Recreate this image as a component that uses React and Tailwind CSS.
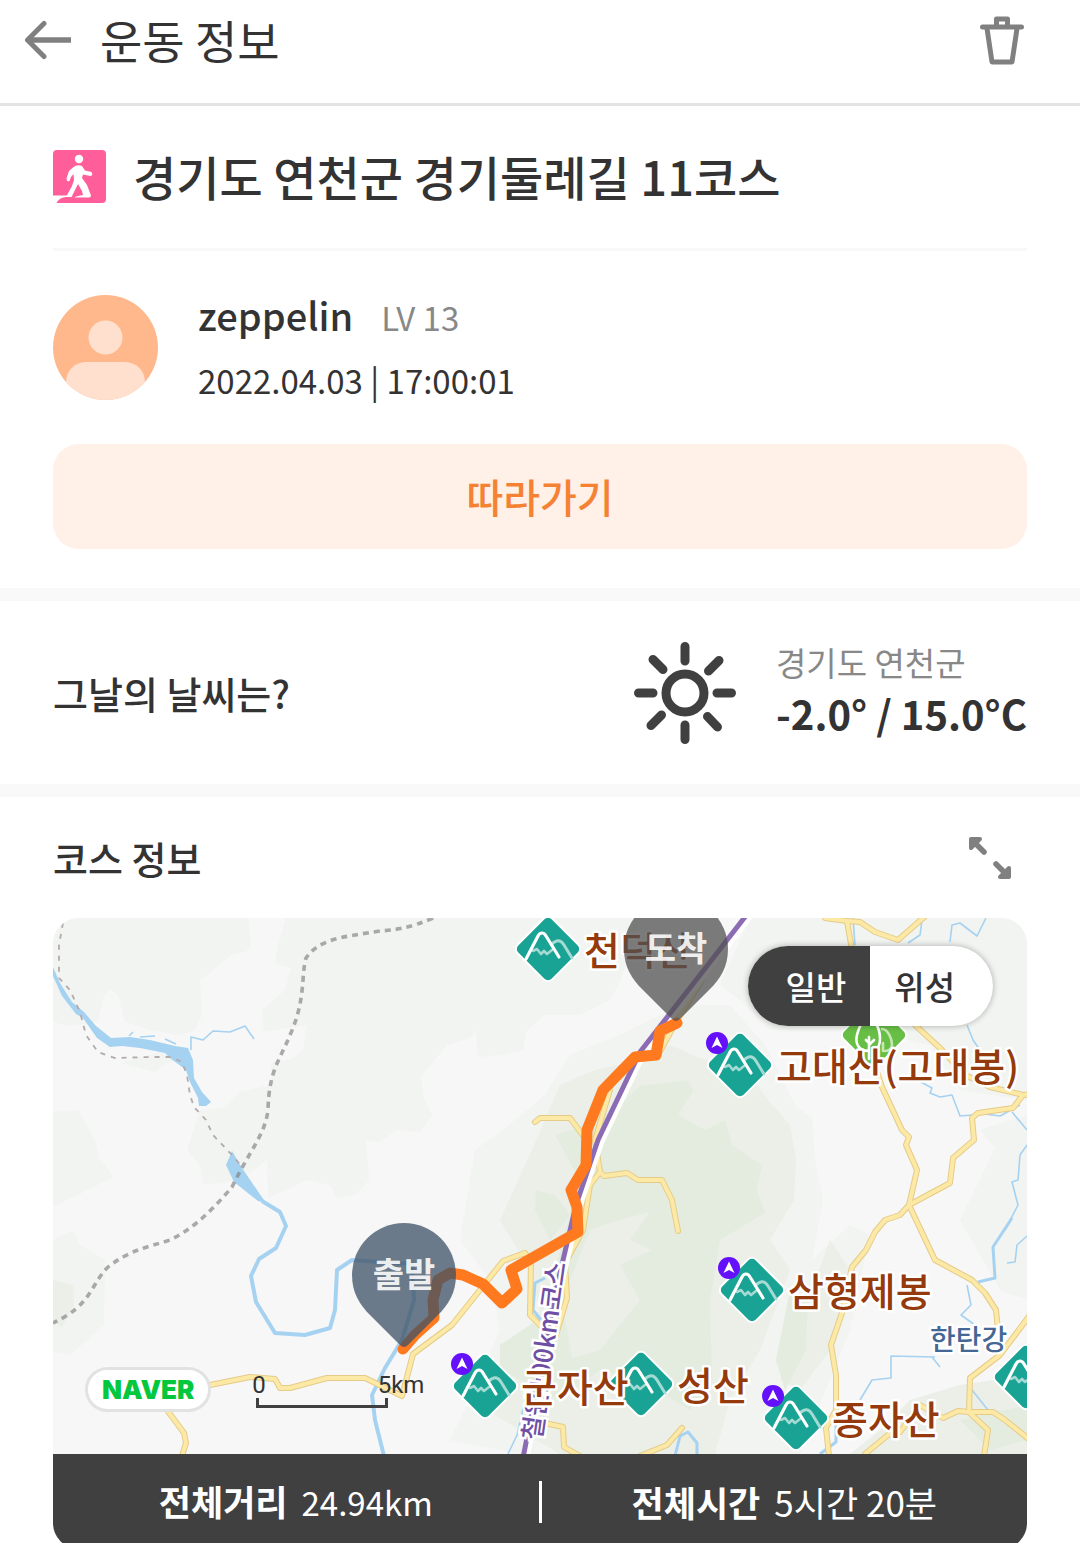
import React, { useState } from "react";

const reliefLight = [
  "M53 918H248L251 945 247 951 231 955 216 968 200 980 202 1015 195 1030 180 1035 150 1030 125 1022 118 995 110 990 104 995 98 1022 70 1026 53 1022Z",
  "M286 918 277 950 275 964 291 968 285 990 262 1010 264 1032 307 1025 303 1050 290 1060 271 1062 272 1085 240 1092 225 1108 200 1110 187 1150 200 1165 204 1185 240 1180 267 1160 268 1198 308 1180 330 1185 337 1198 355 1195 369 1180 366 1140 380 1142 397 1130 420 1132 433 1115 424 1100 421 1077 447 1045 470 1038 476 1030 477 1057 500 1055 523 1050 527 1030 545 1015 580 1015 610 1000 621 980 640 918Z",
  "M53 1112 78 1110 95 1140 100 1160 114 1177 53 1207Z",
  "M53 1240 73 1230 80 1245 105 1260 104 1325 70 1355 53 1352Z",
  "M120 1063 155 1072 166 1063 185 1060 160 1052Z",
  "M1027 918H750L720 985 740 1000 770 1030 860 1030 930 1045 960 1090 1027 1100Z",
  "M1027 1115 980 1130 995 1148 975 1190 960 1220 1000 1290 1027 1300Z",
  "M475 1150 505 1128 545 1095 570 1055 620 1035 680 1005 730 1005 765 1045 795 1105 812 1118 815 1160 823 1200 812 1260 850 1225 870 1235 850 1330 800 1454H520L450 1440 470 1400 500 1330 490 1280 460 1240Z",
];

const reliefMid = [
  "M532 1150 560 1085 595 1070 640 1060 670 1045 700 1058 745 1068 768 1100 790 1125 796 1160 794 1200 770 1240 790 1270 760 1350 730 1400 715 1454H560L520 1430 470 1400 500 1370 540 1310 530 1270 500 1220Z",
  "M53 1280 73 1285 74 1305 62 1327 53 1322Z",
  "M910 1400 960 1385 1027 1375V1454H850L880 1430Z",
  "M830 1240 812 1290 780 1380 800 1390 830 1350 850 1270Z",
];

const reliefDeep = [
  "M555 1135 572 1130 614 1110 640 1086 688 1080 693 1091 678 1115 705 1130 725 1120 732 1145 762 1165 757 1190 765 1213 720 1240 710 1300 712 1380 690 1410 640 1380 600 1370 560 1400 500 1370 500 1345 545 1315 560 1250 580 1180Z",
  "M536 1190 555 1195 570 1215 550 1240 535 1210Z",
  "M790 1290 808 1300 806 1350 785 1390 776 1360Z",
  "M960 1420 1027 1405V1440L990 1450Z",
];

const reliefGaps = [
  "M612 1222 650 1212 630 1240 652 1250 620 1265 640 1300 600 1350 572 1358 562 1300 590 1230Z",
];

const rivers = [
  "M191 1050V1037L203 1040 213 1031 230 1032 245 1026 254 1039",
  "M129 1036 133 1032 M140 1037 155 1036 M165 1039 176 1044",
  "M950 942 952 925 960 923 977 936 986 918",
  "M855 945 853 918 M908 943 920 935 922 920",
  "M967 1025 973 1040 980 1050 M910 1070 917 1080 932 1088 930 1093 940 1097 952 1095 960 1116 985 1114 1000 1116 1020 1105 M1012 1112 1027 1130",
  "M1027 1145 1020 1155 1018 1180 1012 1182 1018 1205 1005 1230",
  "M967 1285 971 1305 961 1315 975 1325",
  "M1027 1236 1017 1245 1015 1262 1007 1263",
  "M935 1357 891 1356V1378L872 1380 860 1400 M932 1357 940 1367",
  "M972 1390 988 1410",
  "M525 1400 517 1435 508 1454",
];

const roads = [
  "M205 1386 250 1377 275 1379 280 1388 290 1388 327 1378 365 1378 402 1396 413 1354 452 1325 480 1290 503 1261 525 1253 531 1262 530 1315 547 1332",
  "M167 1410 184 1433 186 1443 182 1456",
  "M535 1122 540 1118 570 1118 585 1138",
  "M610 1090 595 1140 600 1172 590 1185 583 1230 565 1263 567 1298 556 1335",
  "M600 1172 604 1176 627 1173 638 1180 662 1180 672 1200 678 1231",
  "M702 980 676 1022 658 1055",
  "M825 918 847 921 860 922 875 932 898 940 930 912",
  "M847 921 852 950 868 1045 882 1087 902 1130 909 1137 906 1145 917 1170 909 1205 935 1260 972 1280 985 1293 996 1310 998 1330",
  "M909 1205 900 1215 885 1220 875 1232 866 1250 852 1267 843 1310 831 1345 836 1375V1410L826 1428 829 1456",
  "M909 1205 950 1183 953 1158 974 1140 972 1118 978 1113 1013 1108 1023 1095 990 1087 965 1075 940 1048 915 1025",
  "M1030 1315 1000 1355 970 1378 969 1412 988 1430 984 1456",
  "M1023 1095 1030 1094",
  "M1030 1440 1005 1420 993 1412 969 1412 958 1411 943 1418 920 1405 900 1432 888 1435 865 1454",
  "M545 1423 563 1427 564 1447 580 1456",
  "M640 1456 667 1445 682 1428",
];

const route =
  "M677 1023 660 1031 656 1055 635 1057 603 1090 587 1130 586 1165 571 1190 577 1207 578 1232 511 1270 517 1289 502 1303 483 1284 463 1275 450 1273 438 1280 433 1300 434 1318 415 1335 403 1349";

const railway =
  "M433 918C410 928 395 930 380 931 340 937 318 940 306 958 301 975 306 1000 290 1035 280 1060 269 1070 268 1110 265 1135 250 1150 232 1187 215 1207 195 1228 170 1240 145 1248 130 1250 108 1267 90 1285 92 1305 53 1323";

const border =
  "M63 923 59 945V978L70 990 80 1012 86 1035 98 1052 115 1058 150 1057 170 1057 182 1062 187 1075 190 1095 194 1107 206 1120 213 1135 232 1155 243 1168";

const peaks = [
  { x: 548, y: 949, name: "천덕산" },
  { x: 740, y: 1065, name: "고대산(고대봉)", badge: true },
  { x: 752, y: 1290, name: "삼형제봉", badge: true },
  { x: 485, y: 1386, name: "군자산", badge: true },
  { x: 641, y: 1384, name: "성산" },
  { x: 796, y: 1418, name: "종자산", badge: true },
  { x: 1026, y: 1377 },
];

function Peak({ x, y, badge }) {
  return (
    <g transform={`translate(${x} ${y})`} fill="none" strokeLinecap="round" strokeLinejoin="round">
      <rect x="-24.5" y="-24.5" width="49" height="49" rx="6" transform="rotate(45)" fill="#18a394" stroke="#fff" strokeWidth="2" />
      <path d="M-15 2 -11 0 -7 5 -4 2 -1 5 4 1" stroke="#a4dad3" strokeWidth="2.6" />
      <path d="M4 -5C9 -10 13 -9 16 -4L24 9" stroke="#a4dad3" strokeWidth="3" />
      <path d="M-22 10 -10 -13C-8 -17 -4 -17 -2 -13L11 8" stroke="#fff" strokeWidth="3.2" />
      {badge && (
        <g transform="translate(-23 -22)">
          <circle r="11" fill="#6410fa" />
          <path d="M0 -6.5 5.5 5 0 2 -5.5 5Z" fill="#fff" />
        </g>
      )}
    </g>
  );
}

function Pin({ x, y, color, label }) {
  return (
    <g transform={`translate(${x} ${y})`}>
      <path
        d="M0 -52A52 52 0 0 1 52 0C52 18 44 30 34 40L4 70Q0 74 -4 70L-34 40C-44 30 -52 18 -52 0A52 52 0 0 1 0 -52Z"
        fill={color}
        fillOpacity="0.75"
      />
      <text y="12" textAnchor="middle" fontSize="34" fontWeight="700" fill="#fff" fillOpacity="0.9">
        {label}
      </text>
    </g>
  );
}

function CourseMap() {
  return (
    <svg viewBox="53 918 974 536" className="block w-full bg-[#f7f7f7]" role="img" aria-label="코스 지도">
      <g fill="#f1f4f0">
        {reliefLight.map((d) => (
          <path key={d} d={d} />
        ))}
      </g>
      <g fill="#ebefe8">
        {reliefMid.map((d) => (
          <path key={d} d={d} />
        ))}
      </g>
      <g fill="#e4ecdf">
        {reliefDeep.map((d) => (
          <path key={d} d={d} />
        ))}
      </g>
      <g fill="#ebefe8">
        {reliefGaps.map((d) => (
          <path key={d} d={d} />
        ))}
      </g>

      {/* water */}
      <g fill="#a6d2f2">
        <path d="M53 967 60 983 72 1002 84 1012 96 1026 111 1038 130 1037 150 1040 175 1046 188 1048 193 1060 194 1078 202 1092 211 1102 206 1106 199 1106 198 1098 190 1082 186 1070 170 1058 165 1053 140 1048 122 1046 110 1047 97 1038 83 1018 76 1014 62 996 53 976Z" />
        <path d="M232 1151 226 1165 234 1182 258 1201 266 1203 242 1168Z" />
      </g>
      <g fill="none" stroke="#a6d2f2" strokeLinejoin="round">
        <path strokeWidth="4" d="M262 1201 280 1212 286 1226 276 1248 259 1259 251 1276 256 1302 275 1333 305 1335 330 1328 335 1310 337 1270 352 1260 380 1262 412 1264 414 1300 402 1340 385 1368 372 1395 375 1420 384 1456" />
        <path strokeWidth="3" d="M1012 1218 993 1247 995 1278 978 1282 M836 1425V1442L820 1454 M545 1278 535 1283 533 1310 541 1320 M675 1456 680 1436 688 1432 697 1443V1456" />
        {rivers.map((d) => (
          <path key={d} d={d} strokeWidth="1.6" />
        ))}
      </g>
      <path d={border} fill="none" stroke="#b3abab" strokeWidth="1.8" strokeDasharray="5 6" />
      <path d={railway} fill="none" stroke="#808080" strokeOpacity="0.65" strokeWidth="3.6" strokeDasharray="6 5" />

      {/* roads */}
      <g fill="none" stroke="#e5cb88" strokeWidth="6" strokeLinejoin="round" strokeLinecap="round">
        {roads.map((d) => (
          <path key={d} d={d} />
        ))}
      </g>
      <g fill="none" stroke="#fde9a6" strokeWidth="4" strokeLinejoin="round" strokeLinecap="round">
        {roads.map((d) => (
          <path key={d} d={d} />
        ))}
      </g>
      <g fill="none">
        <path d="M750 914 702 976 642 1053 600 1141 578 1206 558 1291 525 1458" stroke="#fff" strokeWidth="9" />
        <path d="M748 913 700 975 640 1052 598 1140 576 1205 556 1290 523 1458" stroke="#8c6bb5" strokeWidth="5" />
      </g>
      <path d={route} fill="none" stroke="#ff7a1f" strokeWidth="11" strokeLinejoin="round" strokeLinecap="round" />

      <text
        transform="translate(541 1441) rotate(-82)"
        fontSize="26"
        fontWeight="500"
        fill="#6f4fa3"
        stroke="#fff"
        strokeWidth="5"
        paintOrder="stroke"
      >
        철원100km코스
      </text>

      {/* forest */}
      <g transform="translate(874 1035)" fill="none" stroke="#fff" strokeWidth="2.6" strokeLinecap="round">
        <rect x="-24.5" y="-24.5" width="49" height="49" rx="6" transform="rotate(45)" fill="#68bf45" strokeWidth="2" />
        <path d="M-5 24V2M-5 10 0 5M-5 8 -8 5M-5 16C-16 16 -19 8 -17 0C-14 -12 -8 -18 -5 -18C0 -16 6 -8 6 4C6 10 4 14 0 16" />
        <path d="M9 16V8M8 -6C14 -6 18 4 18 10C18 14 14 16 11 16" stroke="#c7e8b5" />
      </g>

      {peaks.map((peak) => (
        <Peak key={`${peak.x}-${peak.y}`} {...peak} />
      ))}
      <g fontSize="39" fontWeight="500" fill="#943a0c" stroke="#fff" strokeWidth="5" strokeLinejoin="round" paintOrder="stroke">
        {peaks
          .filter((peak) => peak.name)
          .map((peak) => (
            <text key={peak.name} x={peak.x + 36} y={peak.y + 16}>
              {peak.name}
            </text>
          ))}
        <text x="930" y="1350" fontSize="28" fill="#456796">
          한탄강
        </text>
      </g>

      <Pin x={404} y={1275} color="#3c5065" label="출발" />
      <Pin x={676} y={949} color="#505050" label="도착" />
    </svg>
  );
}

function App() {
  const [mapType, setMapType] = useState("normal");

  return (
    <div className="min-h-screen bg-white text-[#333333] font-['Noto_Sans_CJK_KR',sans-serif]">
      <header className="flex items-center justify-between border-b-3 border-[#e4e4e4] pt-[6px] pb-[30px] pl-6 pr-[53px]">
        <div className="flex items-center gap-7">
          <button type="button" aria-label="뒤로">
            <svg viewBox="0 0 48 48" className="block size-12" fill="none" stroke="#808080" strokeLinejoin="round">
              <path d="M3 24H47" strokeWidth="5.5" />
              <path d="M20 7.500 3.500 24 20 40.500" strokeWidth="5" strokeLinecap="round" />
            </svg>
          </button>
          <h1 className="text-[46px] leading-[67px]">운동 정보</h1>
        </div>
        <button type="button" aria-label="삭제">
          <svg viewBox="0 0 48 54" className="block h-[54px] w-12" fill="none" stroke="#808080" strokeWidth="5" strokeLinejoin="round" strokeLinecap="round">
            <path d="M3.500 14H42.500M8 15.500 13 49H33L38 15.500" />
            <path d="M17.500 13V6H28.500V13" />
          </svg>
        </button>
      </header>

      <section className="px-[53px] pb-[39px]">
        <div className="flex items-center gap-[27px] border-b-3 border-[#f9f9f9] pt-[35px] pb-[37px]">
          <svg viewBox="0 0 53 53" className="block size-[53px] shrink-0">
            <rect width="53" height="53" rx="4" fill="#ff5e9a" />
            <path d="M0 45.500H14.500L20 47H13C8 47.500 5 50 3.500 53H0Z" fill="#fff" />
            <circle cx="26" cy="9" r="4.200" fill="#fff" />
            <path d="M20.500 17Q24 14 29 16L32 20.500 38.500 22Q40.500 25 37.500 26L30 24.500 29 28 34 35 38 45.500Q38 48 35 47.500H21.500Q21 46.500 30 45L29 41 25 34 23 38 18.500 47H13L19 36 21 30 20.500 24 18 27 16.500 31Q13.500 32 13.500 28.500L16 21Z" fill="#fff" />
          </svg>
          <h2 className="text-[47px] leading-[70px] font-medium">경기도 연천군 경기둘레길 11코스</h2>
        </div>

        <div className="flex items-center gap-10 py-8">
          <svg viewBox="0 0 105 105" className="block size-[105px] shrink-0">
            <defs>
              <clipPath id="avatar">
                <circle cx="52.500" cy="52.500" r="52.500" />
              </clipPath>
            </defs>
            <g clipPath="url(#avatar)">
              <rect width="105" height="105" fill="#ffb78c" />
              <circle cx="52.500" cy="42.500" r="17" fill="#ffe0cf" />
              <rect x="13" y="67" width="79" height="50" rx="20" fill="#ffe0cf" />
            </g>
          </svg>
          <div className="leading-[63px]">
            <p className="flex items-baseline gap-7">
              <span className="text-[38px] font-medium">zeppelin</span>
              <span className="text-[33px] text-[#888888]">LV 13</span>
            </p>
            <p className="text-[33px]">2022.04.03 | 17:00:01</p>
          </div>
        </div>

        <button type="button" className="w-full rounded-[26px] bg-[#fff0e8] py-[22px] text-[40px] leading-[61px] font-medium text-[#f58233]">
          따라가기
        </button>
      </section>

      <section className="flex items-center justify-between border-y-13 border-[#f9f9f9] px-[53px] py-9">
        <h2 className="text-[38px] leading-[60px] font-medium">그날의 날씨는?</h2>
        <div className="flex items-center gap-10">
          <svg viewBox="-51 -51 102 102" className="block size-[102px]" fill="none" stroke="#404040" strokeWidth="9" strokeLinecap="round">
            <circle r="19" />
            <path d="M0 -46.500V-32M0 46.500V32M-46.500 0H-32M46.500 0H32M-32 -33.500 -22 -23.500M34 -32.500 23.500 -22M-34 32.500 -23.500 22M32.500 34 22.500 23.500" />
          </svg>
          <div className="pb-2">
            <p className="text-[33px] leading-[50px] text-[#888888]">경기도 연천군</p>
            <p className="text-[40px] leading-[53px] font-bold">-2.0° / 15.0°C</p>
          </div>
        </div>
      </section>

      <section className="px-[53px]">
        <div className="flex items-center justify-between py-[30px] pr-[14px]">
          <h2 className="text-[38px] leading-[61px] font-medium">코스 정보</h2>
          <button type="button" aria-label="지도 확대">
            <svg viewBox="0 0 46 46" className="block size-[46px]" fill="#808080" stroke="#808080" strokeLinecap="round" strokeLinejoin="round">
              <path d="M4 13V4H13ZM42 33V42H33Z" strokeWidth="4" />
              <path d="M8 8 17 17M38 38 29 29" strokeWidth="5.5" />
            </svg>
          </button>
        </div>

        <div className="overflow-hidden rounded-[26px]">
          <div className="relative">
            <CourseMap />
            <div className="absolute top-7 right-[34px] flex overflow-hidden rounded-full bg-white text-[33px] leading-[80px] font-medium shadow-[0_0_6px_rgba(0,0,0,0.3)]">
              <button
                type="button"
                aria-pressed={mapType === "normal"}
                onClick={() => setMapType("normal")}
                className={mapType === "normal" ? "bg-[#404040] pl-[38px] pr-6 text-white" : "pl-[38px] pr-6"}
              >
                일반
              </button>
              <button
                type="button"
                aria-pressed={mapType === "satellite"}
                onClick={() => setMapType("satellite")}
                className={mapType === "satellite" ? "bg-[#404040] pl-6 pr-[38px] text-white" : "pl-6 pr-[38px]"}
              >
                위성
              </button>
            </div>
            <div className="absolute bottom-[42px] left-8 flex items-end gap-[45px]">
              <span className="rounded-full border-3 border-[#e2e2e2] bg-white px-[14px] text-[26px] leading-[39px] font-black text-[#03c73c] font-[Inter,sans-serif]">
                NAVER
              </span>
              <div className="mb-1 text-[24px] leading-[26px] font-[Roboto,sans-serif]">
                <div className="-ml-1 flex w-[172px] justify-between">
                  <span>0</span>
                  <span>5km</span>
                </div>
                <div className="h-[10px] w-[132px] border-x-3 border-b-3 border-[#404040]" />
              </div>
            </div>
          </div>

          <dl className="flex items-center bg-[#404040] py-[18px] text-[35px] leading-[58px] text-white">
            <div className="flex flex-1 items-baseline justify-center gap-[14px]">
              <dt className="font-bold">전체거리</dt>
              <dd className="text-[33px]">24.94km</dd>
            </div>
            <div className="h-[42px] w-[3px] bg-white" />
            <div className="flex flex-1 items-baseline justify-center gap-[14px]">
              <dt className="font-bold">전체시간</dt>
              <dd>5시간 20분</dd>
            </div>
          </dl>
        </div>
      </section>
    </div>
  );
}

export default App;
